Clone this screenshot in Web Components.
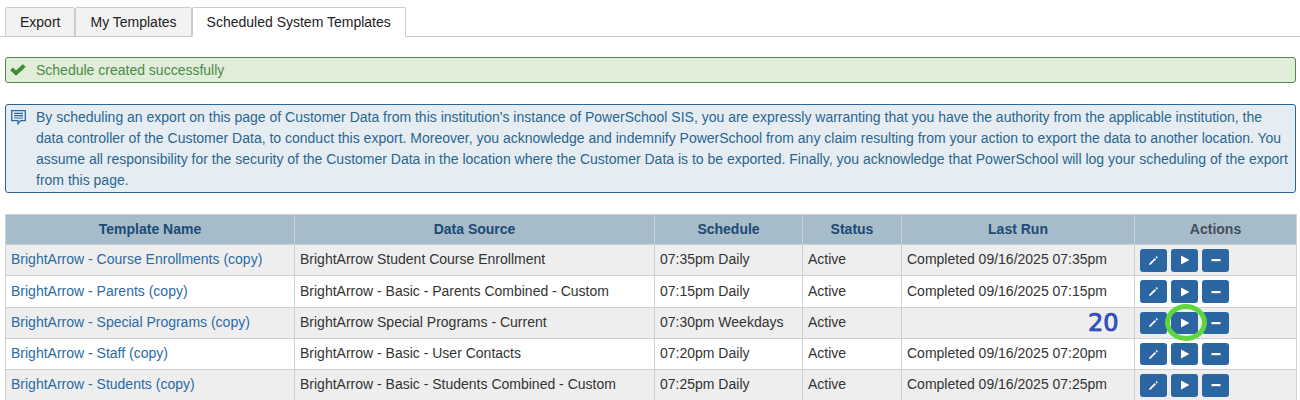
<!DOCTYPE html>
<html>
<head>
<meta charset="utf-8">
<title>Scheduled System Templates</title>
<style>
  html, body { margin: 0; padding: 0; background: #fff; overflow: hidden; }
  body { height: 400px; font-family: "Liberation Sans", Arial, sans-serif; font-size: 14px; color: #333; }
</style>
</head>
<body>
<export-page>
  <tab-bar>
    <tab-item>Export</tab-item>
    <tab-item>My Templates</tab-item>
    <tab-item active>Scheduled System Templates</tab-item>
  </tab-bar>
  <notice-box type="success">Schedule created successfully</notice-box>
  <notice-box type="info">By scheduling an export on this page of Customer Data from this institution's instance of PowerSchool SIS, you are expressly warranting that you have the authority from the applicable institution, the data controller of the Customer Data, to conduct this export. Moreover, you acknowledge and indemnify PowerSchool from any claim resulting from your action to export the data to another location. You assume all responsibility for the security of the Customer Data in the location where the Customer Data is to be exported. Finally, you acknowledge that PowerSchool will log your scheduling of the export from this page.</notice-box>
  <templates-table></templates-table>
</export-page>

<script>
// Page wrapper
class ExportPage extends HTMLElement {
    constructor() {
        super();
        this.attachShadow({ mode: 'open' });
        this.shadowRoot.innerHTML = `
            <style>
                :host { display: block; padding: 7px 4px 0 5px; }
            </style>
            <slot></slot>
        `;
    }
}

class TabBar extends HTMLElement {
    constructor() {
        super();
        this.attachShadow({ mode: 'open' });
        this.shadowRoot.innerHTML = `
            <style>
                :host {
                    display: flex;
                    height: 30px;
                    margin: 0 -4px 20px -5px;
                    padding-left: 5px;
                    box-sizing: border-box;
                    border-bottom: 1px solid #ccc;
                }
            </style>
            <slot></slot>
        `;
    }
}

class TabItem extends HTMLElement {
    constructor() {
        super();
        this.attachShadow({ mode: 'open' });
        this.shadowRoot.innerHTML = `
            <style>
                :host {
                    display: block;
                    box-sizing: border-box;
                    height: 30px;
                    padding: 6px 14px 0;
                    background: #f2f2f2;
                    border: 1px solid #ccc;
                    border-radius: 2px 2px 0 0;
                    color: #222;
                    line-height: 16px;
                    white-space: nowrap;
                }
                :host([active]) { background: #fff; border-bottom-color: #fff; }
            </style>
            <slot></slot>
        `;
    }
}

class NoticeBox extends HTMLElement {
    constructor() {
        super();
        this.attachShadow({ mode: 'open' });
        const success = this.getAttribute('type') === 'success';
        const icon = success
            ? `<svg width="16" height="12" viewBox="0 0 16 12"><path d="M0.2 6.2 L3 3.6 L6 6.4 L12.8 0.2 L15.8 2.8 L6 11.8 Z" fill="#3d8a35"/></svg>`
            : `<svg width="15" height="15" viewBox="0 0 15 15"><path d="M0.7 0.7 H14.3 V10.7 H9.6 L7 13.8 V10.7 H0.7 Z" fill="none" stroke="#2d6aa5" stroke-width="1.3"/><path d="M3 3.4 H12 M3 5.7 H12 M3 8 H12" stroke="#2d6aa5" stroke-width="1.2"/></svg>`;
        this.shadowRoot.innerHTML = `
            <style>
                :host {
                    display: block;
                    position: relative;
                    box-sizing: border-box;
                    margin-bottom: 21px;
                    padding: 1.5px 4px 1.5px 30px;
                    border: 1px solid ${success ? '#52884a' : '#2f6490'};
                    border-radius: 3px;
                    background: ${success ? '#e0edd9' : '#e6edf2'};
                    color: ${success ? '#4c8a47' : '#2a6690'};
                    line-height: ${success ? 21.2 : 21}px;
                }
                .icon { position: absolute; left: ${success ? 4 : 5}px; top: ${success ? 6 : 5}px; line-height: 0; }
            </style>
            <span class="icon">${icon}</span>
            <slot></slot>
        `;
    }
}

class ActionButton extends HTMLElement {
    constructor() {
        super();
        this.attachShadow({ mode: 'open' });
        const icons = {
            edit: `<svg width="11" height="11" viewBox="0 0 11 11"><path d="M1 10 L1.5 8.2 L6.8 2.9 L8.1 4.2 L2.8 9.5 Z M7.6 2.1 L8.6 1.1 L9.9 2.4 L8.9 3.4 Z" fill="#fff"/></svg>`,
            run: `<svg width="10" height="10" viewBox="0 0 10 10"><path d="M1 0.6 L9.4 5 L1 9.4 Z" fill="#fff"/></svg>`,
            remove: `<svg width="10" height="10" viewBox="0 0 10 10"><rect x="0.5" y="4" width="9" height="2.2" fill="#fff"/></svg>`
        };
        this.shadowRoot.innerHTML = `
            <style>
                :host {
                    display: flex;
                    align-items: center;
                    justify-content: center;
                    width: 27px;
                    height: 22.5px;
                    background: #2b66a2;
                    border-radius: 3px;
                }
            </style>
            ${icons[this.getAttribute('icon')]}
        `;
    }
}
customElements.define('action-button', ActionButton);

const rows = [
    ['BrightArrow - Course Enrollments (copy)', 'BrightArrow Student Course Enrollment', '07:35pm Daily', 'Active', 'Completed 09/16/2025 07:35pm'],
    ['BrightArrow - Parents (copy)', 'BrightArrow - Basic - Parents Combined - Custom', '07:15pm Daily', 'Active', 'Completed 09/16/2025 07:15pm'],
    ['BrightArrow - Special Programs (copy)', 'BrightArrow Special Programs - Current', '07:30pm Weekdays', 'Active', ''],
    ['BrightArrow - Staff (copy)', 'BrightArrow - Basic - User Contacts', '07:20pm Daily', 'Active', 'Completed 09/16/2025 07:20pm'],
    ['BrightArrow - Students (copy)', 'BrightArrow - Basic - Students Combined - Custom', '07:25pm Daily', 'Active', 'Completed 09/16/2025 07:25pm']
];

class TemplatesTable extends HTMLElement {
    constructor() {
        super();
        this.attachShadow({ mode: 'open' });
        const body = rows.map((r, i) => `
            <tr>
                <td><a href="#">${r[0]}</a></td>
                <td>${r[1]}</td>
                <td>${r[2]}</td>
                <td>${r[3]}</td>
                <td>${r[4]}</td>
                <td class="actions">
                    <div class="btns">
                        <action-button icon="edit"></action-button>
                        <action-button icon="run"></action-button>
                        <action-button icon="remove"></action-button>
                        ${i === 2 ? '<span class="num">20</span><span class="ring"></span>' : ''}
                    </div>
                </td>
            </tr>`).join('');
        this.shadowRoot.innerHTML = `
            <style>
                :host { display: block; }
                table { border-collapse: collapse; table-layout: fixed; width: 1291px; }
                th, td { border: 1px solid #d0d0d0; padding: 0 5px 2px; box-sizing: border-box; text-align: left; white-space: nowrap; }
                td { height: 31.25px; }
                td.actions { padding-bottom: 0; }
                th { height: 30px; background: #a7bcca; color: #1c4a74; text-align: center; font-weight: bold; }
                th:last-child { color: #444f58; }
                tr:nth-child(odd) td { background: #eeeeee; }
                tr:nth-child(even) td { background: #fff; }
                a { color: #2a6ba5; text-decoration: none; }
                .btns { position: relative; display: flex; gap: 4px; }
                .num {
                    position: absolute; left: -52px; top: -1px;
                    font: 24px/24px "DejaVu Sans", sans-serif;
                    color: #2f5fe8;
                    -webkit-text-stroke: 0.7px #1b2d8c;
                }
                .ring {
                    position: absolute; left: 25px; top: -8px;
                    width: 42px; height: 37px; box-sizing: border-box;
                    border: 5px solid #5dd73c; border-radius: 50%;
                }
            </style>
            <table>
                <colgroup>
                    <col style="width:289px"><col style="width:360px"><col style="width:148px">
                    <col style="width:99px"><col style="width:233px"><col style="width:162px">
                </colgroup>
                <thead>
                    <tr><th>Template Name</th><th>Data Source</th><th>Schedule</th><th>Status</th><th>Last Run</th><th>Actions</th></tr>
                </thead>
                <tbody>${body}</tbody>
            </table>
        `;
    }
}

customElements.define('export-page', ExportPage);
customElements.define('tab-bar', TabBar);
customElements.define('tab-item', TabItem);
customElements.define('notice-box', NoticeBox);
customElements.define('templates-table', TemplatesTable);
</script>
</body>
</html>
